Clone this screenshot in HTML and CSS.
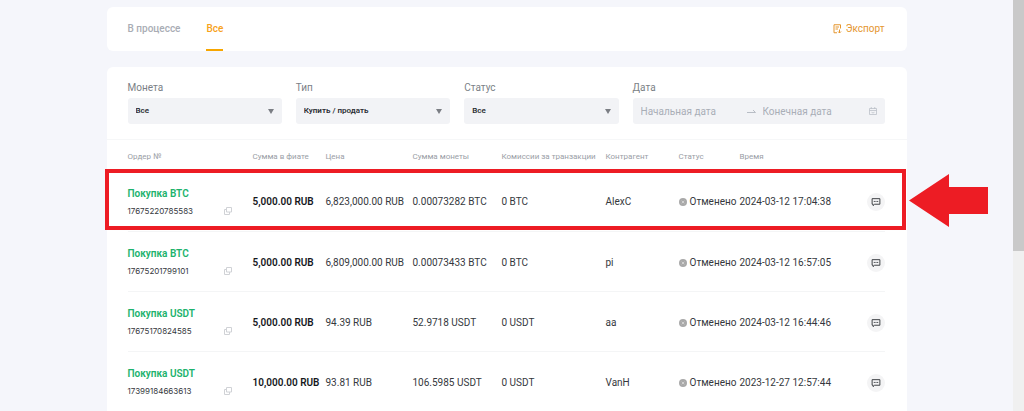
FILE: index.html
```html
<!DOCTYPE html>
<html lang="ru">
<head>
<meta charset="utf-8">
<title>Ордера</title>
<link rel="stylesheet" href="styles.css">
</head>
<body>
<svg class="sprite" width="0" height="0" aria-hidden="true">
  <symbol id="copy" viewBox="0 0 16 16"><path d="M5 1h10v9H5zM5 5H1v10h10v-5" fill="none" stroke="currentColor" stroke-width="2"/></symbol>
  <symbol id="chat" viewBox="0 0 18 18"><path d="M2 3h14v10H6.500L3.800 15.500V13H2z" fill="none" stroke="currentColor" stroke-width="1.700"/><path d="M5 8h2M8 8h2M11 8h2" stroke="currentColor" stroke-width="1.700"/></symbol>
  <symbol id="cancel" viewBox="0 0 16 16"><circle cx="8" cy="8" r="8" fill="#a9a9a9"/><path d="M5.500 5.500l5 5m0-5l-5 5" stroke="#ddd" stroke-width="1.500"/></symbol>
  <symbol id="caret" viewBox="0 0 6 5"><path d="M0 0h6L3 5z" fill="currentColor"/></symbol>
</svg>
<div class="page">
  <main class="content">
    <nav class="card tabs">
      <button class="tab">В процессе</button>
      <button class="tab tab-active">Все</button>
      <button class="export">
        <svg width="9" height="10" viewBox="0 0 18 20" fill="none" stroke="currentColor" stroke-width="2"><path d="M15 9V1.500H2v16h6M5 6h7M5 10h5M13 11v7m-3-3l3 3 3-3"/></svg>
        Экспорт
      </button>
    </nav>
    <section class="card orders">
      <form class="filters">
        <div class="field">
          <label for="coin">Монета</label>
          <div class="control"><select id="coin"><option>Все</option></select><svg class="caret"><use href="#caret"/></svg></div>
        </div>
        <div class="field">
          <label for="type">Тип</label>
          <div class="control"><select id="type"><option>Купить / продать</option></select><svg class="caret"><use href="#caret"/></svg></div>
        </div>
        <div class="field">
          <label for="status">Статус</label>
          <div class="control"><select id="status"><option>Все</option></select><svg class="caret"><use href="#caret"/></svg></div>
        </div>
        <div class="field">
          <label for="from">Дата</label>
          <div class="control range">
            <input id="from" type="text" placeholder="Начальная дата">
            <svg width="9" height="5" viewBox="0 0 9 5"><path d="M0 3.500h8.500L6 1" fill="none" stroke="currentColor"/></svg>
            <input type="text" placeholder="Конечная дата" aria-label="Конечная дата">
            <svg width="8" height="8" viewBox="0 0 16 16" fill="none" stroke="currentColor" stroke-width="1.500"><path d="M1 3h14v12H1zM1 7h14M4.500 0v4M11.500 0v4M5 10.500l3 1.500 3-1.500"/></svg>
          </div>
        </div>
      </form>
      <table>
        <colgroup><col class="c-order"><col class="c-fiat"><col class="c-price"><col class="c-amount"><col class="c-fee"><col class="c-party"><col class="c-status"><col class="c-time"><col class="c-chat"></colgroup>
        <thead>
          <tr><th>Ордер №</th><th>Сумма в фиате</th><th>Цена</th><th>Сумма монеты</th><th>Комиссии за транзакции</th><th>Контрагент</th><th>Статус</th><th>Время</th><td></td></tr>
        </thead>
        <tbody>
          <tr class="marked">
            <td><a class="order" href="#">Покупка BTC</a><div class="number">17675220785583<button class="copy" aria-label="Копировать"><svg><use href="#copy"/></svg></button></div></td>
            <td class="fiat">5,000.00 RUB</td><td>6,823,000.00 RUB</td><td>0.00073282 BTC</td><td>0 BTC</td><td>AlexC</td>
            <td><span class="state"><svg><use href="#cancel"/></svg>Отменено</span></td><td>2024-03-12 17:04:38</td>
            <td><button class="chat" aria-label="Чат"><svg><use href="#chat"/></svg></button>
              <div class="frame"></div>
              <svg class="arrow" viewBox="0 0 79 53"><path d="M0 26.500L40 0v13h39v27H40v13z" fill="#ed1c24"/></svg></td>
          </tr>
          <tr>
            <td><a class="order" href="#">Покупка BTC</a><div class="number">17675201799101<button class="copy" aria-label="Копировать"><svg><use href="#copy"/></svg></button></div></td>
            <td class="fiat">5,000.00 RUB</td><td>6,809,000.00 RUB</td><td>0.00073433 BTC</td><td>0 BTC</td><td>pi</td>
            <td><span class="state"><svg><use href="#cancel"/></svg>Отменено</span></td><td>2024-03-12 16:57:05</td>
            <td><button class="chat" aria-label="Чат"><svg><use href="#chat"/></svg></button></td>
          </tr>
          <tr>
            <td><a class="order" href="#">Покупка USDT</a><div class="number">17675170824585<button class="copy" aria-label="Копировать"><svg><use href="#copy"/></svg></button></div></td>
            <td class="fiat">5,000.00 RUB</td><td>94.39 RUB</td><td>52.9718 USDT</td><td>0 USDT</td><td>aa</td>
            <td><span class="state"><svg><use href="#cancel"/></svg>Отменено</span></td><td>2024-03-12 16:44:46</td>
            <td><button class="chat" aria-label="Чат"><svg><use href="#chat"/></svg></button></td>
          </tr>
          <tr>
            <td><a class="order" href="#">Покупка USDT</a><div class="number">17399184663613<button class="copy" aria-label="Копировать"><svg><use href="#copy"/></svg></button></div></td>
            <td class="fiat">10,000.00 RUB</td><td>93.81 RUB</td><td>106.5985 USDT</td><td>0 USDT</td><td>VanH</td>
            <td><span class="state"><svg><use href="#cancel"/></svg>Отменено</span></td><td>2023-12-27 12:57:44</td>
            <td><button class="chat" aria-label="Чат"><svg><use href="#chat"/></svg></button></td>
          </tr>
        </tbody>
      </table>
    </section>
  </main>
  <div class="scrollbar"><div class="thumb"></div></div>
</div>
</body>
</html>
```
FILE: styles.css
```css
* { box-sizing: border-box; }
body {
  margin: 0;
  background: #f5f6fb;
  color: #35383d;
  font-family: Roboto, sans-serif;
  font-size: 10px;
  line-height: 14px;
}
.sprite { position: absolute; }
button, select, input {
  margin: 0;
  padding: 0;
  border: 0;
  background: none;
  color: inherit;
  font: inherit;
}
.page { display: flex; min-height: 100vh; }
.content {
  display: flex;
  flex: 1;
  flex-direction: column;
  align-items: center;
  gap: 16px;
  min-width: 0;
  padding-top: 7px;
}
.card {
  width: 100%;
  max-width: 800px;
  padding: 0 22px 0 21px;
  border-radius: 6px;
  background: #fff;
}
.tabs { display: flex; gap: 26px; height: 44px; }
.tab {
  padding-top: 2px;
  border-bottom: 2px solid transparent;
  color: #a9adb5;
  font-weight: 500;
}
.tab-active { border-color: #f7a600; color: #f7a21c; }
.export {
  display: flex;
  align-items: center;
  gap: 4px;
  margin-left: auto;
  color: #e5962f;
}
.orders {
  flex: 1;
  padding-top: 14px;
  border-radius: 6px 6px 0 0;
}
.filters {
  display: grid;
  grid-template-columns: 155fr 155fr 155fr 253fr;
  gap: 14px;
  margin: 0 -22px 0 -21px;
  padding: 0 22px 15px 21px;
  border-bottom: 1px solid #f6f7f8;
}
.field { min-width: 0; }
.field label { display: block; margin-bottom: 3px; color: #7b7f86; }
.control {
  display: flex;
  align-items: center;
  height: 26px;
  padding: 0 8px;
  border-radius: 3px;
  background: #f2f3f6;
}
.control select {
  flex: 1;
  appearance: none;
  color: #2b2e33;
  font-size: 8px;
  font-weight: 600;
}
.caret { width: 6px; height: 5px; color: #7b7e84; }
.range { gap: 7px; color: #b8bdc5; }
.range input { flex: 1; min-width: 0; padding-top: 1px; }
.range input::placeholder { color: #a9aeb7; opacity: 1; }
table { width: 100%; table-layout: fixed; border-collapse: collapse; }
.c-order { width: 125px; }
.c-fiat { width: 73px; }
.c-price { width: 87px; }
.c-amount { width: 89px; }
.c-fee { width: 104px; }
.c-party { width: 73px; }
.c-status { width: 61px; }
.c-time { width: 127px; }
.c-chat { width: 18px; }
th, td { padding: 0; text-align: left; white-space: nowrap; }
th {
  height: 31px;
  padding-top: 2px;
  color: #9a9ea6;
  font-size: 8px;
  font-weight: 400;
}
tbody td { padding-top: 3px; }
tbody tr { height: 60px; border-bottom: 1px solid #f4f5f6; }
tbody tr:last-child { border-bottom: 0; }
.order {
  display: block;
  margin-bottom: 3px;
  color: #20b26c;
  font-weight: 600;
  text-decoration: none;
}
.number {
  display: flex;
  align-items: center;
  justify-content: space-between;
  padding-right: 21px;
  font-family: Inter, sans-serif;
  font-size: 8px;
}
.copy { display: flex; color: #d0d2d6; }
.copy svg { width: 8px; height: 8px; }
.fiat { color: #16181c; font-weight: 600; }
.state { display: flex; align-items: center; gap: 3px; }
.state svg { width: 8px; height: 8px; }
.chat {
  display: flex;
  align-items: center;
  justify-content: center;
  width: 18px;
  height: 18px;
  border-radius: 50%;
  background: #f4f4f5;
}
.chat svg { width: 10px; height: 10px; }
.marked { position: relative; }
.frame {
  position: absolute;
  inset: -2px -21px 0 -23px;
  border: 4px solid #ed1c24;
}
.arrow {
  position: absolute;
  top: 3px;
  left: calc(100% + 24px);
  width: 79px;
  height: 53px;
}
.scrollbar { width: 11px; background: #f0f0f0; }
.thumb { height: 61%; background: #c9c9c9; }
```
